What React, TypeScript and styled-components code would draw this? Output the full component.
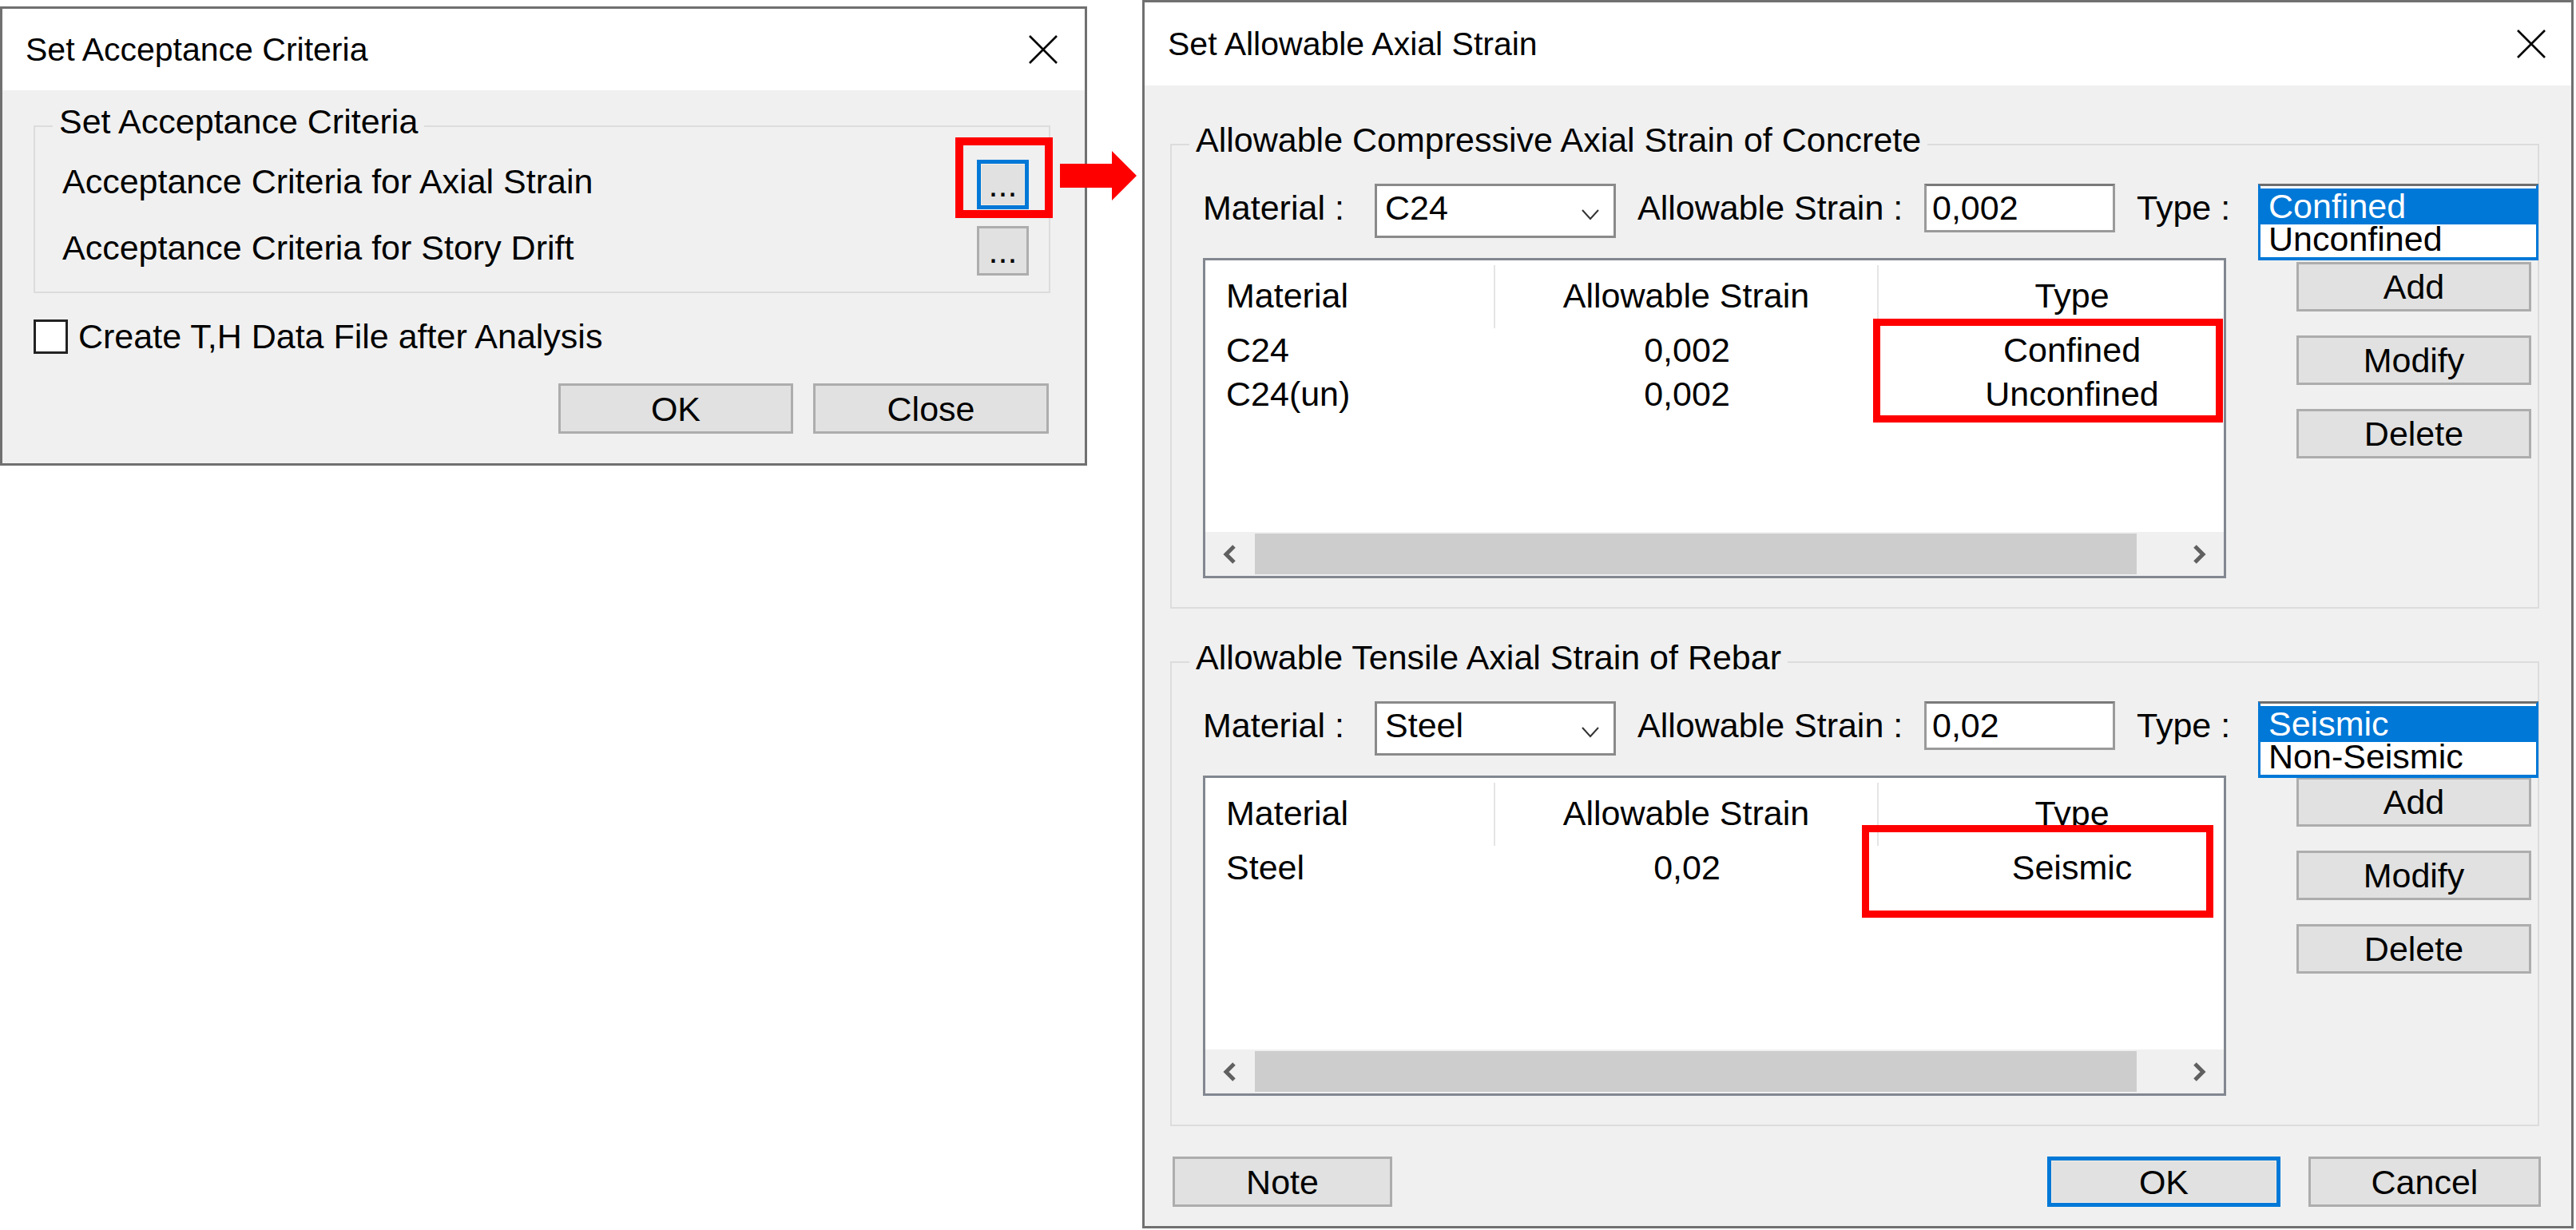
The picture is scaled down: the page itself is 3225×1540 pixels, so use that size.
import React from 'react';
import styled, { createGlobalStyle } from 'styled-components';

// === GLOBAL ===
const GlobalStyle = createGlobalStyle`
  html, body { margin: 0; padding: 0; background: #ffffff; }
  body { font-family: "Liberation Sans", Arial, sans-serif; color: #000; }
  * { box-sizing: border-box; }
`;

// === WINDOW CHROME ===
const Page = styled.div`
  position: relative; width: 3225px; height: 1540px; overflow: hidden;
  display: flex; align-items: flex-start; gap: 69px;
`;
const Window = styled.div<{ $w: number; $h: number; $top?: number }>`
  width: ${p => p.$w}px; height: ${p => p.$h}px; margin-top: ${p => p.$top ?? 0}px;
  flex-shrink: 0; border: 3px solid #707070; background: #f0f0f0;
  display: flex; flex-direction: column;
`;
const TitleBar = styled.div<{ $h: number; $padR: number }>`
  height: ${p => p.$h}px; flex-shrink: 0; background: #ffffff;
  display: flex; align-items: center; justify-content: space-between;
  padding: 0 ${p => p.$padR}px 0 29px;
`;
const TitleText = styled.span` font-size: 41px; line-height: 48px; `;
const Body = styled.div` flex: 1; display: flex; flex-direction: column; `;
const Footer = styled.div<{ $pad: string; $split?: boolean }>`
  margin-top: auto; padding: ${p => p.$pad};
  display: flex; align-items: center; gap: ${p => (p.$split ? 35 : 25)}px;
  justify-content: flex-end;
`;
const Spacer = styled.div` flex: 1; `;

// === GROUP BOX ===
const Group = styled.fieldset<{ $m: string }>`
  margin: ${p => p.$m}; padding: 0; min-width: 0;
  border: 2px solid #dcdcdc;
`;
const Legend = styled.legend`
  margin-left: 22px; padding: 0 8px 10px; font-size: 43px; line-height: 43px;
`;
const GroupContent = styled.div<{ $pad: string; $gap?: number }>`
  padding: ${p => p.$pad}; display: flex; flex-direction: column; gap: ${p => p.$gap ?? 0}px;
`;

// === CONTROLS ===
const Button = styled.button<{ $w: number; $h?: number; $focused?: boolean }>`
  width: ${p => p.$w}px; height: ${p => p.$h ?? 62}px; flex-shrink: 0; padding: 0;
  background: #e1e1e1; color: #000;
  border: ${p => (p.$focused ? '5px solid #0078d7' : '3px solid #adadad')};
  box-shadow: ${p => (p.$focused ? 'inset 0 0 0 1px #f3eee6' : 'none')};
  font-family: "Liberation Sans", Arial, sans-serif; font-size: 43px; line-height: 48px;
  display: flex; align-items: center; justify-content: center;
`;
const CriteriaRow = styled.div`
  height: 62px; display: flex; align-items: center; justify-content: space-between;
`;
const RowLabel = styled.span` font-size: 43px; line-height: 48px; padding-bottom: 8px; `;
const Anchor = styled.div` position: relative; flex-shrink: 0; `;
const Highlight = styled.div<{ $l: number; $t: number; $w: number; $h: number; $b: number }>`
  position: absolute; left: ${p => p.$l}px; top: ${p => p.$t}px;
  width: ${p => p.$w}px; height: ${p => p.$h}px;
  border: ${p => p.$b}px solid #ff0000; pointer-events: none; z-index: 3;
`;
const CheckRow = styled.label`
  margin: 30px 0 0 39px; display: flex; align-items: center; gap: 13px;
  font-size: 43px; line-height: 48px;
`;
const CheckBox = styled.span`
  width: 43px; height: 43px; border: 3px solid #222; background: #fff;
`;
const Arrow = styled.svg`
  position: absolute; left: 1327px; top: 189px; z-index: 4;
`;

// === STRAIN EDITOR ===
const FieldRow = styled.div`
  display: flex; align-items: flex-start; gap: 27px; height: 68px;
`;
const FieldLabel = styled.span<{ $w: number }>`
  width: ${p => p.$w}px; flex-shrink: 0; margin-top: 6px;
  font-size: 43px; line-height: 48px; white-space: pre;
`;
const Combo = styled.div`
  width: 302px; height: 68px; flex-shrink: 0; background: #fff;
  border: 3px solid #8a8a8a; padding: 3px 18px 0 10px;
  display: flex; justify-content: space-between;
  font-size: 43px; line-height: 48px;
`;
const ComboArrow = styled.svg` align-self: center; margin-top: 6px; `;
const TextInput = styled.div`
  width: 239px; height: 61px; flex-shrink: 0; background: #fff;
  border: 3px solid #9a9a9a; border-top-color: #7a7a7a; padding: 3px 7px 0;
  font-size: 43px; line-height: 48px;
`;
const TypeSlot = styled.div` position: relative; width: 351px; height: 68px; flex-shrink: 0; `;
const DropList = styled.ul`
  position: absolute; left: 0; top: 0; z-index: 2; width: 351px; margin: 0; padding: 3px 0 0;
  list-style: none; background: #fff;
  border: 3px solid #0078d7; border-top-color: #6e6e6e; border-bottom-width: 4px;
`;
const DropItem = styled.li<{ $sel?: boolean }>`
  height: ${p => (p.$sel ? 45 : 41)}px; line-height: ${p => (p.$sel ? 45 : 37)}px;
  padding-left: 10px; font-size: 43px;
  background: ${p => (p.$sel ? '#0078d7' : '#fff')}; color: ${p => (p.$sel ? '#fff' : '#000')};
`;
const ListRow = styled.div`
  margin-top: 25px; display: flex; justify-content: space-between; align-items: flex-start;
`;
const ListView = styled.div`
  position: relative; width: 1281px; height: 401px; flex-shrink: 0;
  border: 3px solid #828790; background: #fff;
  display: flex; flex-direction: column;
`;
const HeaderRow = styled.div` display: flex; margin-top: 6px; height: 79px; flex-shrink: 0; overflow: hidden; `;
const HeaderCell = styled.div<{ $w: number; $center?: boolean; $last?: boolean }>`
  width: ${p => p.$w}px; flex-shrink: 0; padding: 14px 0 0 ${p => (p.$center ? 0 : 26)}px;
  text-align: ${p => (p.$center ? 'center' : 'left')};
  border-right: ${p => (p.$last ? 'none' : '2px solid #e5e5e5')};
  font-size: 43px; line-height: 48px; white-space: nowrap;
`;
const Rows = styled.div` flex: 1; overflow: hidden; `;
const DataRow = styled.div` display: flex; height: 55px; `;
const DataCell = styled.div<{ $w: number; $center?: boolean }>`
  width: ${p => p.$w}px; flex-shrink: 0; padding-left: ${p => (p.$center ? 0 : 26)}px;
  text-align: ${p => (p.$center ? 'center' : 'left')};
  font-size: 43px; line-height: 55px; white-space: nowrap;
`;
const ScrollBar = styled.div` height: 55px; flex-shrink: 0; display: flex; background: #f0f0f0; `;
const ScrollArrow = styled.div` width: 62px; display: flex; align-items: center; justify-content: center; `;
const Track = styled.div` flex: 1; display: flex; align-items: center; `;
const Thumb = styled.div` height: 51px; background: #cdcdcd; `;
const SideButtons = styled.div<{ $top: number }>`
  padding-top: ${p => p.$top}px; display: flex; flex-direction: column; gap: 30px;
`;

const CloseIcon = () => (
  <svg width="36" height="36" viewBox="0 0 36 36">
    <path d="M1 1 L35 35 M35 1 L1 35" stroke="#000" strokeWidth="2.6" />
  </svg>
);

const Chevron = ({ dir }: { dir: 'left' | 'right' }) => (
  <svg width="22" height="26" viewBox="0 0 22 26">
    <path d={dir === 'left' ? 'M16 3 L6 13 L16 23' : 'M6 3 L16 13 L6 23'} stroke="#606060" strokeWidth="5" fill="none" />
  </svg>
);

type Entry = { material: string; strain: string; type: string };
type Section = {
  title: string; mt: number; material: string; strain: string;
  types: string[]; rows: Entry[]; box: { l: number; t: number; w: number; h: number };
  buttonsTop: number;
};

const COLS = [363, 480, 484];

const sections: Section[] = [
  {
    title: 'Allowable Compressive Axial Strain of Concrete', mt: 47,
    material: 'C24', strain: '0,002', types: ['Confined', 'Unconfined'],
    rows: [
      { material: 'C24', strain: '0,002', type: 'Confined' },
      { material: 'C24(un)', strain: '0,002', type: 'Unconfined' },
    ],
    box: { l: 836, t: 73, w: 438, h: 130 }, buttonsTop: 5,
  },
  {
    title: 'Allowable Tensile Axial Strain of Rebar', mt: 40,
    material: 'Steel', strain: '0,02', types: ['Seismic', 'Non-Seismic'],
    rows: [{ material: 'Steel', strain: '0,02', type: 'Seismic' }],
    box: { l: 822, t: 59, w: 440, h: 116 }, buttonsTop: 2,
  },
];

const StrainGroup: React.FC<{ s: Section }> = ({ s }) => (
  <Group $m={`${s.mt}px 40px 0 32px`}>
    <Legend>{s.title}</Legend>
    <GroupContent $pad="23px 8px 36px 39px">
      <FieldRow>
        <FieldLabel $w={188}>Material :</FieldLabel>
        <Combo>
          <span>{s.material}</span>
          <ComboArrow width="22" height="14" viewBox="0 0 22 14">
            <path d="M1 1 L11 12 L21 1" stroke="#333" strokeWidth="2" fill="none" />
          </ComboArrow>
        </Combo>
        <FieldLabel $w={332}>Allowable Strain :</FieldLabel>
        <TextInput>{s.strain}</TextInput>
        <FieldLabel $w={125}>Type :</FieldLabel>
        <TypeSlot>
          <DropList>
            {s.types.map((t, i) => <DropItem key={t} $sel={i === 0}>{t}</DropItem>)}
          </DropList>
        </TypeSlot>
      </FieldRow>
      <ListRow>
        <ListView>
          <HeaderRow>
            <HeaderCell $w={COLS[0]}>Material</HeaderCell>
            <HeaderCell $w={COLS[1]} $center>Allowable Strain</HeaderCell>
            <HeaderCell $w={COLS[2]} $center $last>Type</HeaderCell>
          </HeaderRow>
          <Rows>
            {s.rows.map(r => (
              <DataRow key={r.material}>
                <DataCell $w={COLS[0]}>{r.material}</DataCell>
                <DataCell $w={COLS[1]} $center>{r.strain}</DataCell>
                <DataCell $w={COLS[2]} $center>{r.type}</DataCell>
              </DataRow>
            ))}
          </Rows>
          <ScrollBar>
            <ScrollArrow><Chevron dir="left" /></ScrollArrow>
            <Track><Thumb style={{ width: 1104 }} /></Track>
            <ScrollArrow><Chevron dir="right" /></ScrollArrow>
          </ScrollBar>
          <Highlight $l={s.box.l} $t={s.box.t} $w={s.box.w} $h={s.box.h} $b={9} />
        </ListView>
        <SideButtons $top={s.buttonsTop}>
          <Button $w={294}>Add</Button>
          <Button $w={294}>Modify</Button>
          <Button $w={294}>Delete</Button>
        </SideButtons>
      </ListRow>
    </GroupContent>
  </Group>
);

export default function App() {
  return (
    <Page>
      <GlobalStyle />
      <Window $w={1361} $h={575} $top={8}>
        <TitleBar $h={102} $padR={34}>
          <TitleText>Set Acceptance Criteria</TitleText>
          <CloseIcon />
        </TitleBar>
        <Body>
          <Group $m="18px 43px 0 39px">
            <Legend>Set Acceptance Criteria</Legend>
            <GroupContent $pad="16px 25px 20px 34px" $gap={21}>
              <CriteriaRow>
                <RowLabel>Acceptance Criteria for Axial Strain</RowLabel>
                <Anchor>
                  <Button $w={65} $focused>...</Button>
                  <Highlight $l={-27} $t={-28} $w={122} $h={101} $b={10} />
                </Anchor>
              </CriteriaRow>
              <CriteriaRow>
                <RowLabel>Acceptance Criteria for Story Drift</RowLabel>
                <Button $w={65}>...</Button>
              </CriteriaRow>
            </GroupContent>
          </Group>
          <CheckRow>
            <CheckBox />
            Create T,H Data File after Analysis
          </CheckRow>
          <Footer $pad="0 45px 37px">
            <Button $w={294} $h={63}>OK</Button>
            <Button $w={295} $h={63}>Close</Button>
          </Footer>
        </Body>
      </Window>

      <Arrow width="96" height="62" viewBox="0 0 96 62">
        <path d="M0 16 H65 V0 L96 31 L65 62 V46 H0 Z" fill="#ff0000" />
      </Arrow>

      <Window $w={1792} $h={1538}>
        <TitleBar $h={104} $padR={32}>
          <TitleText>Set Allowable Axial Strain</TitleText>
          <CloseIcon />
        </TitleBar>
        <Body>
          {sections.map(s => <StrainGroup key={s.title} s={s} />)}
          <Footer $pad="0 38px 24px 35px" $split>
            <Button $w={275} $h={63}>Note</Button>
            <Spacer />
            <Button $w={292} $h={63} $focused>OK</Button>
            <Button $w={291} $h={63}>Cancel</Button>
          </Footer>
        </Body>
      </Window>
    </Page>
  );
}
